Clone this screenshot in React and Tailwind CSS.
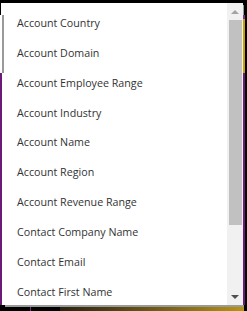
const options = [
  'Account Country',
  'Account Domain',
  'Account Employee Range',
  'Account Industry',
  'Account Name',
  'Account Region',
  'Account Revenue Range',
  'Contact Company Name',
  'Contact Email',
  'Contact First Name',
];

const App = () => {
  return (
    <div className="w-[247px] h-[311px] overflow-hidden bg-black flex flex-col" style={{ fontFamily: '"Open Sans", sans-serif' }}>
      <div className="h-[3px]" />
      <div className="h-[302px] flex">
        {/* page peeking out on the left */}
        <div className="w-[4px] flex flex-col">
          <div className="h-[12px] bg-white ml-[1px]" />
          <div className="h-[58px] flex">
            <div className="w-[2px] bg-white" />
            <div className="w-[2px] bg-[#9a9a9a]" />
          </div>
          <div className="flex-1 flex">
            <div className="w-[2px] bg-[#6b1a78]" />
            <div className="w-[2px] bg-white" />
          </div>
        </div>

        {/* listbox popup */}
        <div className="w-[239px] h-full flex bg-white shadow-[1px_2px_0_#9a9a9a]">
          <ul className="flex-1 overflow-hidden pt-[5px]">
            {options.map((o) => (
              <li key={o} className="h-[29.9px] flex items-center pl-[13px] text-[10.7px] text-[#333] whitespace-nowrap">
                {o}
              </li>
            ))}
          </ul>
          <div className="w-[16px] h-full bg-[#f1f1f1] flex flex-col items-center">
            <div className="h-[17px] w-full flex items-center justify-center">
              <svg width="8" height="4" viewBox="0 0 8 4">
                <polygon points="0,4 8,4 4,0" fill="#a3a3a3" />
              </svg>
            </div>
            <div className="w-[13px] h-[205px] bg-[#c1c1c1]" />
            <div className="flex-1" />
            <div className="h-[17px] w-full flex items-center justify-center">
              <svg width="8" height="4" viewBox="0 0 8 4">
                <polygon points="0,0 8,0 4,4" fill="#505050" />
              </svg>
            </div>
          </div>
        </div>

        {/* page peeking out on the right */}
        <div className="w-[2px] flex flex-col">
          <div className="h-[12px]" />
          <div className="h-[4px] bg-[#8a2a9a]" />
          <div className="h-[54px] bg-[#c9a400]" />
          <div className="flex-1 bg-[#6b1a78]" />
        </div>
      </div>
      <div className="flex-1 flex pt-[2px]">
        <div className="w-[30px]" />
        <div className="w-[1px] bg-[#7a2a8a]" />
        <div className="w-[29px]" />
        <div className="w-[184px] bg-gradient-to-r from-[#2a2410] to-[#b89410]" />
      </div>
    </div>
  );
};

export default App;
